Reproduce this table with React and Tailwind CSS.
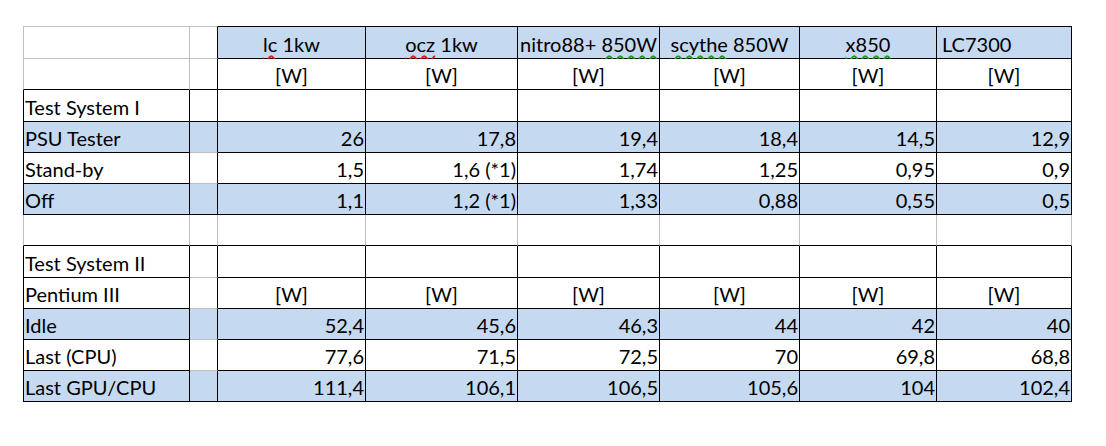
import React from "react";

const BT = { k: "border-t border-t-black", g: "border-t border-t-[#c0c0c0]" };
const BL = { k: "border-l border-l-black", g: "border-l border-l-[#c0c0c0]" };
const BR = { k: "border-r border-r-black", g: "border-r border-r-[#c0c0c0]" };
const BB = { k: "border-b border-b-black", g: "border-b border-b-[#c0c0c0]" };

const heads = [
  { pre: "", sq: "lc", post: " 1kw", c: "red", align: "center" },
  { pre: "", sq: "ocz", post: " 1kw", c: "red", align: "center" },
  { pre: "nitro88+ ", sq: "850W", post: "", c: "green", align: "center" },
  { pre: "", sq: "scythe", post: " 850W", c: "green", align: "center" },
  { pre: "", sq: "x850", post: "", c: "green", align: "center" },
  { pre: "LC7300", sq: "", post: "", c: "", align: "left" },
];

const W6 = ["[W]", "[W]", "[W]", "[W]", "[W]", "[W]"];
const E6 = ["", "", "", "", "", ""];

const rows = [
  { h: "h-[33px]", kind: "h1" },
  { h: "h-[31px]", kind: "h2", label: "", vals: W6, center: true },
  { h: "h-[32px]", kind: "top", label: "Test System I", vals: E6 },
  { h: "h-[31px]", kind: "mid", blue: true, label: "PSU Tester", vals: ["26", "17,8", "19,4", "18,4", "14,5", "12,9"] },
  { h: "h-[31px]", kind: "mid", label: "Stand-by", vals: ["1,5", "1,6 (*1)", "1,74", "1,25", "0,95", "0,9"] },
  { h: "h-[31px]", kind: "last", blue: true, label: "Off", vals: ["1,1", "1,2 (*1)", "1,33", "0,88", "0,55", "0,5"] },
  { h: "h-[31px]", kind: "blank", label: "", vals: E6 },
  { h: "h-[32px]", kind: "mid", label: "Test System II", vals: E6 },
  { h: "h-[31px]", kind: "mid", label: "Pentium III", vals: W6, center: true },
  { h: "h-[31px]", kind: "mid", blue: true, label: "Idle", vals: ["52,4", "45,6", "46,3", "44", "42", "40"] },
  { h: "h-[31px]", kind: "mid", label: "Last (CPU)", vals: ["77,6", "71,5", "72,5", "70", "69,8", "68,8"] },
  { h: "h-[31px]", kind: "last", blue: true, label: "Last GPU/CPU", vals: ["111,4", "106,1", "106,5", "105,6", "104", "102,4"] },
];

function borders(kind, col) {
  let t = null, l = null, r = null, b = null;
  if (kind === "h1") {
    if (col === 0) { t = "g"; l = "g"; r = "g"; b = "g"; }
    else if (col === 1) { t = "g"; r = "k"; b = "g"; }
    else { t = "k"; r = "k"; b = "k"; }
  } else if (kind === "h2") {
    if (col === 0) { l = "g"; r = "g"; b = "k"; }
    else { r = "k"; b = "k"; }
  } else if (kind === "blank") {
    if (col === 0) { l = "g"; r = "g"; b = "k"; }
    else { r = "g"; b = "k"; }
  } else if (kind === "top" || kind === "last") {
    if (col === 0) { l = "k"; r = "k"; b = "k"; }
    else { r = "k"; b = "k"; }
  } else {
    if (col === 0) { l = "k"; r = "k"; b = "k"; }
    else if (col === 1) { r = "k"; b = "g"; }
    else { r = "k"; b = "k"; }
  }
  return [t && BT[t], l && BL[l], r && BR[r], b && BB[b]].filter(Boolean).join(" ");
}

function Cell({ row, col, align, children }) {
  const blue = row.blue || (row.kind === "h1" && col >= 2);
  const al =
    align === "right"
      ? "justify-end pr-[1px]"
      : align === "center"
      ? "justify-center"
      : "justify-start pl-[1px]";
  return (
    <div
      className={`${row.h} ${borders(row.kind, col)} ${blue ? "bg-[#c5d9f1]" : "bg-white"} flex items-end ${al} pb-[2px] overflow-visible whitespace-nowrap`}
    >
      {children}
    </div>
  );
}

function Head({ h }) {
  const sqClass =
    h.c === "red"
      ? "underline decoration-wavy decoration-[#e01818] decoration-[1.5px] underline-offset-[3px]"
      : "underline decoration-wavy decoration-[#1e9a1e] decoration-[1.5px] underline-offset-[3px]";
  return (
    <span className={h.align === "left" ? "pl-[4px]" : ""}>
      {h.pre}
      {h.sq && <span className={sqClass}>{h.sq}</span>}
      {h.post}
    </span>
  );
}

export default function App() {
  return (
    <div className="w-[1106px] h-[446px] bg-white pl-[23px] pt-[26px] text-black text-[20px] leading-[24px] font-['Lato',sans-serif]">
      <div className="grid grid-cols-[167px_28px_148px_152px_142px_140px_137px_135px] w-[1049px]">
        {rows.map((row, ri) => {
          if (row.kind === "h1") {
            return (
              <React.Fragment key={ri}>
                <Cell row={row} col={0} align="left" />
                <Cell row={row} col={1} align="left" />
                {heads.map((h, i) => (
                  <Cell key={i} row={row} col={i + 2} align={h.align}>
                    <Head h={h} />
                  </Cell>
                ))}
              </React.Fragment>
            );
          }
          return (
            <React.Fragment key={ri}>
              <Cell row={row} col={0} align="left">{row.label}</Cell>
              <Cell row={row} col={1} align="left" />
              {row.vals.map((v, i) => (
                <Cell key={i} row={row} col={i + 2} align={row.center ? "center" : "right"}>
                  {v}
                </Cell>
              ))}
            </React.Fragment>
          );
        })}
      </div>
    </div>
  );
}
